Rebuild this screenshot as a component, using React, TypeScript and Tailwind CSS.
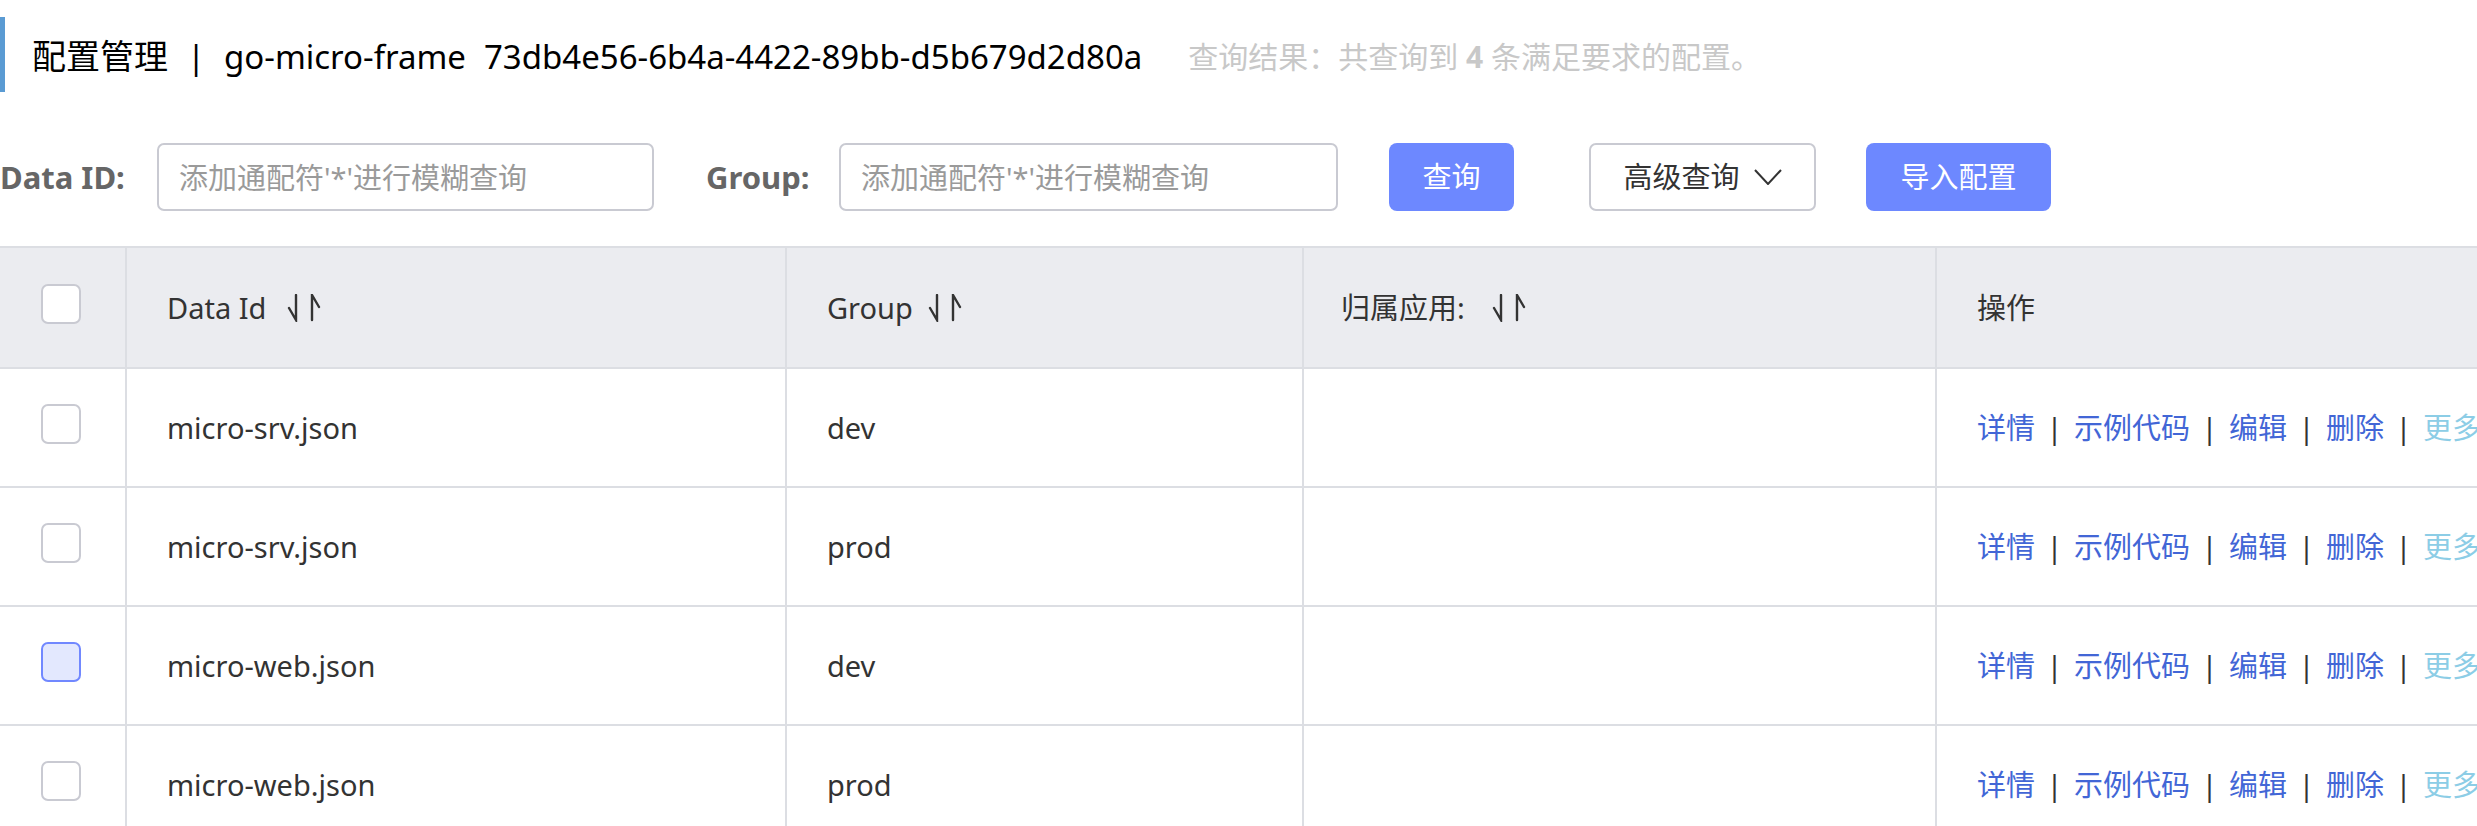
import React from "react"

const rows = [
  { id: "micro-srv.json", group: "dev", active: false },
  { id: "micro-srv.json", group: "prod", active: false },
  { id: "micro-web.json", group: "dev", active: true },
  { id: "micro-web.json", group: "prod", active: false },
]

function SortIcon({ gap = "ml-[20px]" }: { gap?: string }) {
  return (
    <svg width="36" height="28" viewBox="0 0 36 28" className={gap + " shrink-0"} fill="none" stroke="#333" strokeWidth="2.4" strokeLinecap="round">
      <path d="M10 1 V26 L3 14" />
      <path d="M26 26 V1 L33 13" />
    </svg>
  )
}

function Checkbox({ active }: { active?: boolean }) {
  return (
    <div
      className={
        active
          ? "h-[40px] w-[40px] rounded-[7px] border-2 border-[#7188ff] bg-[#e3e8fe]"
          : "h-[40px] w-[40px] rounded-[7px] border-2 border-[#c9cad2] bg-white"
      }
    />
  )
}

function Sep() {
  return <span className="inline-block w-[39px] text-center text-[#333]">|</span>
}

export default function App() {
  return (
    <div className="w-full overflow-hidden bg-white pt-[17px] pb-[40px] font-['Noto_Sans','Noto_Sans_CJK_SC',sans-serif]">
      {/* title bar */}
      <div className="flex h-[75px] items-center">
        <div className="h-full w-[5px] bg-[#5a9bd3]" />
        <div className="ml-[27px] mt-[4px] flex items-center whitespace-nowrap text-[33px] text-black">
          <span className="text-[34px]">配置管理</span>
          <span className="inline-block w-[56px] text-center">|</span>
          <span>go-micro-frame</span>
          <span className="ml-[18px]">73db4e56-6b4a-4422-89bb-d5b679d2d80a</span>
          <span className="ml-[46px] text-[30px] text-[#c8c8c8]">
            查询结果：共查询到 <b className="font-bold">4</b> 条满足要求的配置。
          </span>
        </div>
      </div>

      {/* search row */}
      <div className="mt-[51px] flex h-[68px] items-center whitespace-nowrap text-[29px]">
        <label className="w-[123px] text-right text-[31px] font-bold text-[#666]">Data ID:</label>
        <input
          className="ml-[34px] h-full w-[497px] rounded-[7px] border-2 border-[#c9cad2] px-[20px] text-[#333] outline-none placeholder:text-[#9a9a9a]"
          placeholder="添加通配符'*'进行模糊查询"
        />
        <label className="ml-[52px] w-[103px] text-right text-[31px] font-bold text-[#666]">Group:</label>
        <input
          className="ml-[30px] h-full w-[499px] rounded-[7px] border-2 border-[#c9cad2] px-[20px] text-[#333] outline-none placeholder:text-[#9a9a9a]"
          placeholder="添加通配符'*'进行模糊查询"
        />
        <button className="ml-[51px] h-full w-[125px] rounded-[8px] bg-[#6d88ff] text-white">查询</button>
        <button className="ml-[75px] flex h-full w-[227px] items-center justify-center gap-[14px] rounded-[7px] border-2 border-[#c9cad2] bg-white text-[#333]">
          <span>高级查询</span>
          <svg width="28" height="16" viewBox="0 0 28 16" fill="none" stroke="#333" strokeWidth="2">
            <path d="M1 1 L14 15 L27 1" />
          </svg>
        </button>
        <button className="ml-[50px] h-full w-[185px] rounded-[8px] bg-[#6d88ff] text-white">导入配置</button>
      </div>

      {/* table */}
      <div className="mt-[35px] w-[3000px] border-t-2 border-[#dcdee3] text-[29px] text-[#333]">
        <div className="grid h-[121px] grid-cols-[125px_660px_517px_633px_1065px] border-b-2 border-[#dcdee3] bg-[#ebecf0]">
          <div className="flex items-center pb-[8px] pl-[41px]">
            <Checkbox />
          </div>
          <div className="flex items-center border-l-2 border-[#dcdee3] pl-[40px]">
            Data Id
            <SortIcon gap="ml-[20px]" />
          </div>
          <div className="flex items-center border-l-2 border-[#dcdee3] pl-[40px]">
            Group
            <SortIcon gap="ml-[14px]" />
          </div>
          <div className="flex items-center border-l-2 border-[#dcdee3] pl-[37px]">
            归属应用:
            <SortIcon gap="ml-[26px]" />
          </div>
          <div className="flex items-center border-l-2 border-[#dcdee3] pl-[40px]">操作</div>
        </div>

        {rows.map((r, i) => (
          <div key={i} className="grid h-[119px] grid-cols-[125px_660px_517px_633px_1065px] border-b-2 border-[#dcdee3]">
            <div className="flex items-center pb-[8px] pl-[41px]">
              <Checkbox active={r.active} />
            </div>
            <div className="flex items-center border-l-2 border-[#dcdee3] pl-[40px]">{r.id}</div>
            <div className="flex items-center border-l-2 border-[#dcdee3] pl-[40px]">{r.group}</div>
            <div className="border-l-2 border-[#dcdee3]" />
            <div className="flex items-center whitespace-nowrap border-l-2 border-[#dcdee3] pl-[40px]">
              <a className="text-[#4266d6]">详情</a>
              <Sep />
              <a className="text-[#4266d6]">示例代码</a>
              <Sep />
              <a className="text-[#4266d6]">编辑</a>
              <Sep />
              <a className="text-[#4266d6]">删除</a>
              <Sep />
              <a className="text-[#8ccde6]">更多</a>
            </div>
          </div>
        ))}
      </div>
    </div>
  )
}
